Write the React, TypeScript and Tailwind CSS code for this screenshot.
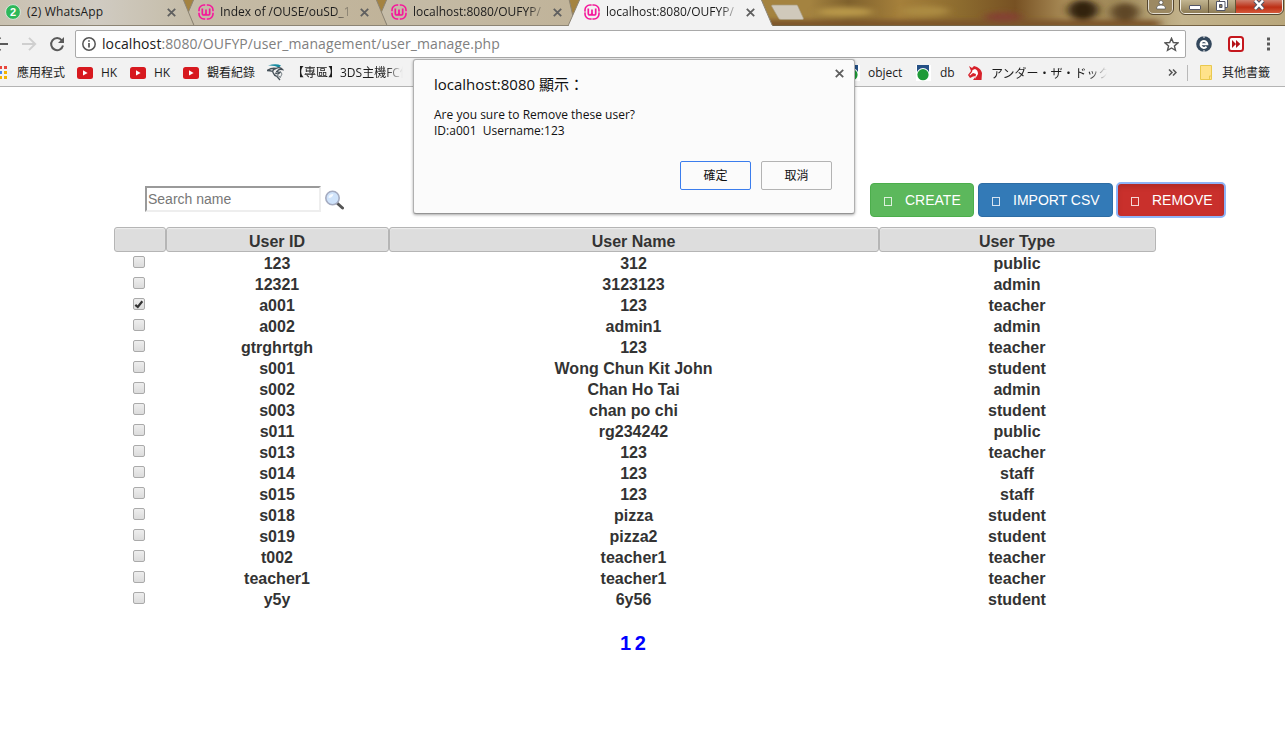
import React from "react";

const UI = "font-['Open_Sans','Noto_Sans_CJK_TC',sans-serif]";

const rows = [
  ["123", "312", "public"],
  ["12321", "3123123", "admin"],
  ["a001", "123", "teacher"],
  ["a002", "admin1", "admin"],
  ["gtrghrtgh", "123", "teacher"],
  ["s001", "Wong Chun Kit John", "student"],
  ["s002", "Chan Ho Tai", "admin"],
  ["s003", "chan po chi", "student"],
  ["s011", "rg234242", "public"],
  ["s013", "123", "teacher"],
  ["s014", "123", "staff"],
  ["s015", "123", "staff"],
  ["s018", "pizza", "student"],
  ["s019", "pizza2", "student"],
  ["t002", "teacher1", "teacher"],
  ["teacher1", "teacher1", "teacher"],
  ["y5y", "6y56", "student"],
];

const Close = ({ className = "" }: { className?: string }) => (
  <svg className={`h-[9px] w-[9px] shrink-0 ${className}`} viewBox="0 0 9 9" stroke="#5f5f5f" strokeWidth="1.8">
    <path d="M.8.8l7.4 7.4M8.2.8L.8 8.2" />
  </svg>
);

const Wamp = () => (
  <svg className="h-4 w-4 shrink-0" viewBox="0 0 16 16" fill="none" stroke="#f5179b">
    <rect x="1" y="1" width="14" height="14" rx="5" strokeWidth="1.6" />
    <path d="M0 8h2M14 8h2M8 14v2M8 0v2" stroke="#e6d3cf" strokeWidth="1" />
    <path d="M4.300 4.500v4.700q0 1.800 1.700 1.800T8 9.200V5.500v3.700q0 1.800 1.900 1.800t1.800-1.800V4.500" strokeWidth="1.700" />
  </svg>
);

const YouTube = () => (
  <svg className="h-3 w-4 shrink-0" viewBox="0 0 16 12">
    <rect width="16" height="12" rx="2.5" fill="#d7191f" />
    <path d="M6 3.300v5.200L10.600 6z" fill="#fff" />
  </svg>
);

const Globe = () => (
  <svg className="h-4 w-[15px] shrink-0" viewBox="0 0 15 16">
    <path d="M0 0h15v16H0z" fill="#fff" />
    <path d="M1 0h12v12H1z" fill="#245085" />
    <circle cx="7" cy="9.500" r="6.500" fill="#fff" />
    <circle cx="7" cy="9.700" r="5.600" fill="#1e9a38" />
  </svg>
);

const fade = "[mask-image:linear-gradient(to_right,black_85%,transparent)]";

function TabStrip() {
  return (
    <div className="relative flex h-[26px] overflow-hidden bg-[linear-gradient(90deg,#a48340_0,#a48340_63%,#7f612d_66%,#a5803b_70%,#8b6a2e_75%,#775123_79%,#aa8d58_83%,#a18b5b_87%,#c3b38c_92%,#b8a67b_100%)]">
      <svg className="absolute inset-0 h-[26px] w-[1285px]" viewBox="0 0 1285 26">
        <defs>
          <filter id="soft" x="-30%" y="-80%" width="160%" height="260%"><feGaussianBlur stdDeviation="5 2.5" /></filter>
          <linearGradient id="tab" x1="0" x2="1" y1="0" y2="0">
            <stop offset="0" stopColor="#c9c1b0" /><stop offset=".5" stopColor="#d0cbc2" /><stop offset="1" stopColor="#c4bba6" />
          </linearGradient>
          <linearGradient id="tab2" x1="0" x2="1" y1="0" y2="0">
            <stop offset="0" stopColor="#c5bca8" /><stop offset="1" stopColor="#c0b399" />
          </linearGradient>
        </defs>
        <g filter="url(#soft)">
          <path d="M760 20h400v8H760z" fill="#7c542a" />
          <ellipse cx="845" cy="12" rx="28" ry="5" fill="#b89749" />
          <ellipse cx="925" cy="11" rx="24" ry="5" fill="#ac8b42" />
          <ellipse cx="1003" cy="17" rx="18" ry="5" fill="#844332" />
          <ellipse cx="1083" cy="10" rx="15" ry="10" fill="#30210f" />
          <ellipse cx="1125" cy="12" rx="14" ry="9" fill="#5e4628" />
        </g>
        <path d="M761 25.500h524" stroke="#756344" />
        <path d="M387 -1L381 13L387 25.500H575L569 -1z" fill="url(#tab2)" stroke="#8c8474" />
        <path d="M194 -1L188 13L194 25.500H387L376 -1z" fill="url(#tab2)" stroke="#8c8474" />
        <path d="M-1 -1V25.500H194L183 -1z" fill="url(#tab)" stroke="#8c8474" />
        <path d="M580 -1L568 26H772.500L761 -1z" fill="#f2f2f2" stroke="#8c8474" />
        <path d="M569 26h203" stroke="#f2f2f2" strokeWidth="2" />
        <path d="M772 5h24.500q1 0 1.300 1l5.500 12q.5 1.500-1 1.500h-21q-2 0-2.600-1L771.500 6z" fill="#d0c9bb" stroke="#a99c7f" strokeWidth=".7" />
      </svg>
      <div className="relative flex h-6 w-[198px] shrink-0 items-center pl-[5px]">
        <svg className="h-4 w-4" viewBox="0 0 16 16">
          <circle cx="8" cy="8" r="7.400" fill="#2eb85a" stroke="#eee" strokeWidth=".8" />
          <text x="8" y="12" textAnchor="middle" fill="#fff" className="font-['Liberation_Sans',sans-serif] text-[11px] font-bold">2</text>
        </svg>
        <span className="ml-[6px] w-[140px] text-[12px] tracking-[.15px]">(2) WhatsApp</span>
        <Close />
      </div>
      {["Index of /OUSE/ouSD_1", "localhost:8080/OUFYP/", "localhost:8080/OUFYP/"].map((t, i) => (
        <div key={i} className="relative flex h-6 w-[193px] shrink-0 items-center">
          <Wamp />
          <span className={`ml-[6px] w-[134px] overflow-hidden text-[12px] whitespace-nowrap ${fade}`}>{t}</span>
          <Close className="ml-[6px]" />
        </div>
      ))}
      <div className="absolute top-0 right-0 flex h-[15px] w-[137px] items-start">
        <div className="flex h-[14px] w-[25px] items-start justify-center rounded-b-[5px] border border-t-0 border-white/70 bg-[#9c8962] outline outline-[#554730]">
          <svg className="h-[10px] w-[10px]" viewBox="0 0 10 10" fill="#fff" stroke="#555" strokeWidth=".7"><circle cx="5" cy="2.500" r="2" /><path d="M.7 9V6.800Q2.500 5 5 5t4.300 1.800V9z" /></svg>
        </div>
        <div className="ml-[7px] flex h-[14px] w-[103px] overflow-hidden rounded-b-[5px] border border-t-0 border-white/80 outline outline-[#554730]">
          <div className="flex w-7 items-start justify-center border-r border-[#665639] bg-[linear-gradient(#c2b591,#8e7c55)] pt-[5px]"><div className="h-[5px] w-3 rounded-[1px] border border-[#535666] bg-white" /></div>
          <div className="flex w-[27px] justify-center border-r border-[#665639] bg-[linear-gradient(#c2b591,#8e7c55)]">
            <svg className="h-[11px] w-3" viewBox="0 0 12 11" fill="#fff" stroke="#535666"><path d="M3.500 -.5h8v8h-8z" /><path d="M.5 1.500h8.500v9H.5z" /><path d="M3.500 4.500h2.500v3H3.500z" fill="#8e7c55" /></svg>
          </div>
          <div className="flex flex-1 justify-center bg-[linear-gradient(#cf806d,#bd2f15_55%,#d5593a)]">
            <svg className="h-[10px] w-3" viewBox="0 0 12 10"><path d="M2 .5l8 8.500M10 .5L2 9" stroke="#535666" strokeWidth="4.500" /><path d="M2 .5l8 8.500M10 .5L2 9" stroke="#fff" strokeWidth="2.500" /></svg>
          </div>
        </div>
      </div>
    </div>
  );
}

function Toolbar() {
  return (
    <div className="flex h-[33px] items-center bg-[#f2f2f2] pt-[3px]">
      <svg className="h-4 w-[66px] shrink-0" viewBox="0 0 66 16" fill="none" strokeWidth="1.900">
        <path d="M-3 8H8M.5 1.500L-6 8l6.500 6.500" stroke="#5a5a5a" />
        <path d="M22 8h13M29 1.800L35.200 8 29 14.200" stroke="#cfcfcf" />
        <path d="M61.800 4.300A6 6 0 1 0 63 9.500" stroke="#5a5a5a" strokeWidth="2" />
        <path d="M64 1v6h-6z" fill="#5a5a5a" />
      </svg>
      <div className="ml-[9px] flex h-7 w-[1111px] shrink-0 items-center rounded-[2px] border border-[#a9a9a9] bg-white">
        <svg className="ml-[6px] h-[14px] w-[14px]" viewBox="0 0 14 14" fill="none" stroke="#555" strokeWidth="1.500"><circle cx="7" cy="7" r="6.200" /><path d="M7 6v4.500M7 3.300v1.500" strokeWidth="1.700" /></svg>
        <span className="-mt-[2px] ml-[6px] text-[14px] whitespace-nowrap tracking-[.09px] text-[#808080]"><span className="text-[#202020]">localhost</span>:8080/OUFYP/user_management/user_manage.php</span>
        <svg className="mr-[6px] ml-auto h-[15px] w-[15px]" viewBox="0 0 15 15" fill="none" stroke="#555" strokeWidth="1.400"><path d="M7.500 1.300l1.800 4.200 4.600.4-3.500 3 1.100 4.500-4-2.400-4 2.400 1.100-4.500-3.500-3 4.600-.4z" /></svg>
      </div>
      <svg className="ml-[10px] h-4 w-4" viewBox="0 0 16 16" fill="none"><circle cx="8" cy="8" r="7.800" fill="#33475c" /><path d="M4.700 8.200h6.600A3.400 3.400 0 1 0 10.500 10.700" stroke="#fff" strokeWidth="2" /><path d="M8 0v2M8 14v2" stroke="#f2f2f2" /></svg>
      <svg className="ml-4 h-4 w-4" viewBox="0 0 16 16"><rect x="1" y="1" width="14" height="14" rx="2.500" fill="#fff" stroke="#c5171d" strokeWidth="2" /><path d="M4 4l4 4-4 4zM8 4l4.300 4L8 12z" fill="#b5141a" /></svg>
      <svg className="ml-[23px] h-[14px] w-[3px]" viewBox="0 0 3 14" fill="#5a5a5a"><path d="M0 .5h3v3H0zM0 5.500h3v3H0zM0 10.500h3v3H0z" /></svg>
    </div>
  );
}

function Bookmarks() {
  return (
    <div className="flex h-7 items-center border-b border-[#b4b4b4] bg-[#f2f2f2] text-[12px] whitespace-nowrap">
      <svg className="h-[13px] w-[7px] shrink-0" viewBox="0 0 7 13"><path d="M-1 0h3v3h-3zM4 0h3v3H4z" fill="#e8453c" /><path d="M-1 5h3v3h-3z" fill="#4688f1" /><path d="M4 5h3v3H4zM-1 10h3v3h-3zM4 10h3v3H4z" fill="#f4b400" /></svg>
      <span className="ml-[10px] w-[60px] shrink-0">應用程式</span>
      <YouTube /><span className="ml-2 w-[29px] shrink-0">HK</span>
      <YouTube /><span className="ml-2 w-[29px] shrink-0">HK</span>
      <YouTube /><span className="ml-2 w-[60px] shrink-0">觀看紀錄</span>
      <svg className="h-[17px] w-[17px] shrink-0" viewBox="0 0 17 17" fill="none"><path d="M1 1.500q8-2.500 13 0l-2 2Q7 1 1 1.500z" fill="#168aa0" /><path d="M0 6.500q5-3 9-2 4-2 6.500 1-4-1-5.500 2M9 4.500q-4 1-3 4t4 4l3 3.500M0 6.500q3 0 6 1M9 7.500l4 1-2 1.500-3-1" stroke="#465159" strokeWidth="1.300" /><path d="M13 7l2 3-2 4M10 11l3 2" stroke="#7a8388" /></svg>
      <span className={`ml-2 w-[111px] shrink-0 overflow-hidden ${fade}`}>【專區】3DS主機FC個</span>
      <div className="ml-[442px] shrink-0"><Globe /></div><span className="ml-2 w-12 shrink-0">object</span>
      <Globe /><span className="ml-[9px] w-[28px] shrink-0">db</span>
      <svg className="h-4 w-[14px] shrink-0" viewBox="0 0 14 16"><path d="M1 1l3 2L6 1l3 1q4 2 5 6l-.5 7H5l3-4-3 .5-3 1.500-2-3 3-4z" fill="#d7212a" /><path d="M4.500 5L7 4q3 1 3 5l-3 5 1-5-3-1-3 2.500L1.500 10 4 7z" fill="#fff" /></svg>
      <span className={`ml-[9px] w-[116px] shrink-0 overflow-hidden font-['Noto_Sans_CJK_JP',sans-serif] ${fade}`}>アンダー・ザ・ドック</span>
      <svg className="ml-[61px] h-[7px] w-[9px] shrink-0" viewBox="0 0 9 7" fill="none" stroke="#555" strokeWidth="1.500"><path d="M1 .5l3 3-3 3M5 .5l3 3-3 3" /></svg>
      <i className="ml-[10px] h-4 w-px shrink-0 bg-[#b9b9b9]" />
      <svg className="ml-3 h-[15px] w-3 shrink-0" viewBox="0 0 12 15"><path d="M.5.5h11v14H.5z" fill="#ffe28a" stroke="#e9c94f" /><path d="M9.500 14v-3h2" fill="none" stroke="#e9c94f" /></svg>
      <span className="ml-[10px] shrink-0">其他書籤</span>
    </div>
  );
}

function ConfirmDialog() {
  return (
    <div className="absolute top-[59px] left-[413px] flex h-[155px] w-[442px] flex-col rounded-[3px] border border-[#b0b0b0] border-b-[#949494] bg-[#fbfbfb] pl-5 text-[#111] shadow-[0_1px_3px_rgba(0,0,0,.35)]">
      <div className="flex h-[47px] items-start justify-between pr-[10px]">
        <h1 className="mt-[13px] text-[15px] leading-[22px]">localhost:8080 顯示：</h1>
        <Close className="mt-[9px]" />
      </div>
      <div className="text-[12px] leading-4 tracking-[.01px] whitespace-pre">Are you sure to Remove these user?{"\n"}ID:a001  Username:123</div>
      <div className="mt-[22px] mr-[22px] flex justify-end gap-[10px] text-[12px]">
        <button className="h-[29px] w-[71px] rounded-[2px] border border-[#3b7ded] bg-[#fbfbfb]">確定</button>
        <button className="h-[29px] w-[71px] rounded-[2px] border border-[#b3b3b3] bg-[#fbfbfb]">取消</button>
      </div>
    </div>
  );
}

const Action = ({ label, className }: { label: string; className: string }) => (
  <button className={`flex h-[34px] items-center rounded-[4px] border pl-[13px] text-[14px] text-white ${className}`}>
    <i className="mt-[2px] mr-[13px] h-[9px] w-2 border border-white/80" />
    {label}
  </button>
);

const columns = "grid grid-cols-[52px_223px_490px_277px]";

export default function App() {
  return (
    <div className="relative h-[737px] w-[1285px] overflow-hidden bg-white">
      <header className={`${UI} text-[#1c1c1c]`}>
        <TabStrip />
        <Toolbar />
        <Bookmarks />
      </header>
      <main className="font-['Liberation_Sans',sans-serif] text-[#333]">
        <div className="flex h-[140px] items-start pt-24 pl-[145px]">
          <input placeholder="Search name" className="mt-[3px] h-[26px] w-[176px] border-2 border-t-[#9a9a9a] border-r-[#eee] border-b-[#eee] border-l-[#9a9a9a] px-px text-[14px] placeholder:text-[#777]" />
          <svg className="mt-[7px] ml-[3px] h-5 w-5" viewBox="0 0 20 20"><path d="M13 13l5.500 5" stroke="#555" strokeWidth="3" strokeLinecap="round" /><circle cx="8.500" cy="8" r="6.700" fill="#cfe3fb" stroke="#a4abc0" strokeWidth="1.600" /><path d="M4.500 8q0-4 5-4-1 4-5 4z" fill="#f5faff" /></svg>
          <div className="ml-[526px] flex gap-1">
            <Action label="CREATE" className="w-[104px] border-[#4cae4c] bg-[#5cb85c]" />
            <Action label="IMPORT CSV" className="w-[135px] border-[#2e6da4] bg-[#337ab7]" />
            <Action label="REMOVE" className="w-[108px] border-[#ac2925] bg-[#c9302c] shadow-[inset_0_3px_5px_rgba(0,0,0,.125)] outline-2 -outline-offset-1 outline-[#8fb4f7]" />
          </div>
        </div>
        <div className="ml-[114px] w-[1042px] text-center text-[16px] font-bold">
          <div className={columns}>
            {["", "User ID", "User Name", "User Type"].map((h, i) => (
              <div key={i} className="h-[25px] rounded-[3px] border border-[#b5b5b5] bg-[#ddd] pt-[2px] pr-px leading-[23px] shadow-[inset_0_1px_1px_#eee]">{h}</div>
            ))}
          </div>
          <div className="pt-px">
            {rows.map(([id, name, type], i) => (
              <div key={i} className={`${columns} h-[21px] leading-[22px]`}>
                <div className="flex justify-center pt-[3px] pr-[2px]">
                  <i className="flex h-3 w-3 items-center justify-center rounded-[2px] border border-[#aaa] bg-[linear-gradient(#eee,#dcdcdc)]">
                    {id === "a001" && <svg className="h-[9px] w-[10px] shrink-0" viewBox="0 0 10 9" fill="none" stroke="#333" strokeWidth="2.200"><path d="M1.300 4.800L3.800 7 8.300 1.300" /></svg>}
                  </i>
                </div>
                <div className="pr-px">{id}</div>
                <div className="pr-px">{name}</div>
                <div className="pr-px">{type}</div>
              </div>
            ))}
          </div>
          <div className="mt-[21px] pr-1 text-[20px] leading-[24px] [word-spacing:-2px] text-[#00f]"><a>1</a> <a>2</a></div>
        </div>
      </main>
      <div className={UI}><ConfirmDialog /></div>
    </div>
  );
}
